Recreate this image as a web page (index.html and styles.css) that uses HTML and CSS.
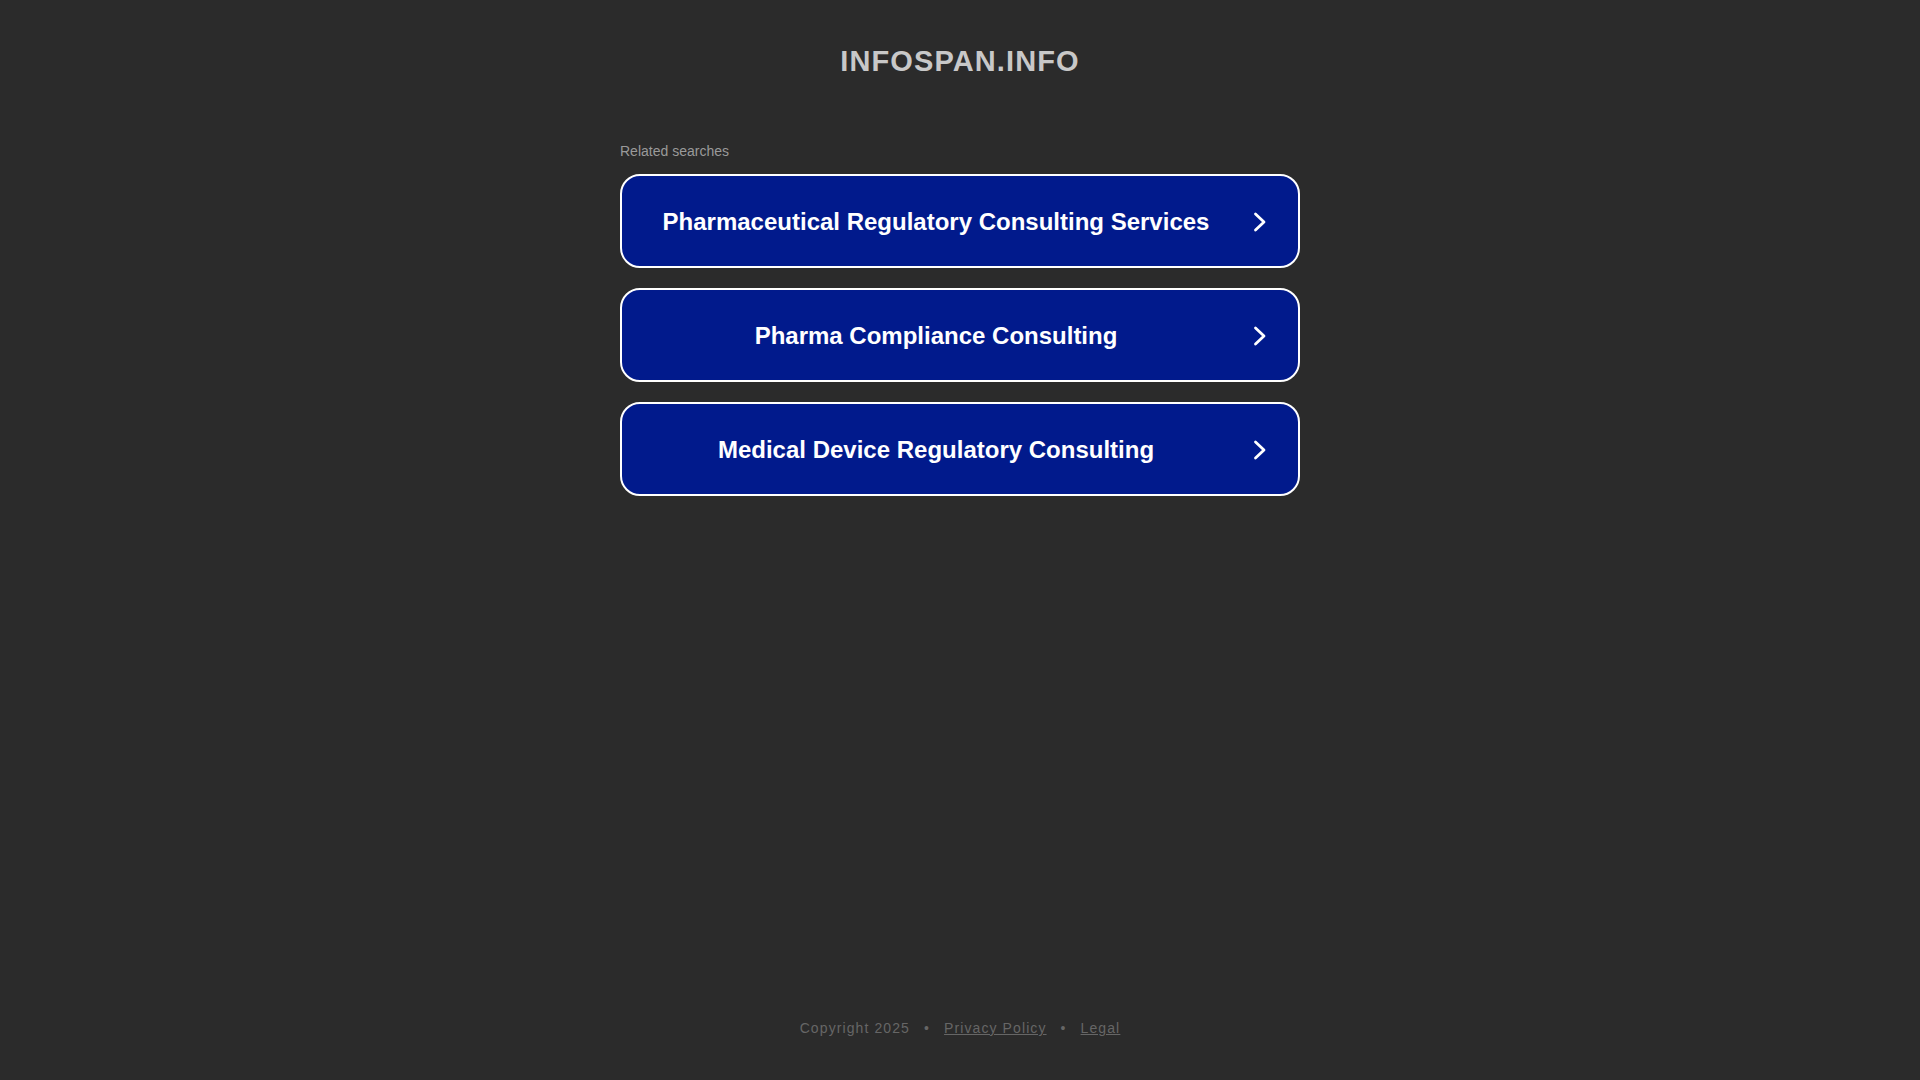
FILE: index.html
```html
<!DOCTYPE html>
<html lang="en">
<head>
<meta charset="utf-8">
<title>infospan.info</title>
<link rel="stylesheet" href="styles.css">
</head>
<body>
<div class="page">
  <header class="header">
    <h1 class="domain">INFOSPAN.INFO</h1>
  </header>
  <main class="main">
    <div class="related">Related searches</div>
    <a class="card" href="#">
      <span class="card-text">Pharmaceutical Regulatory Consulting Services</span>
      <span class="card-arrow"><svg viewBox="0 0 14 20" width="14" height="20"><path d="M2.5 2 L11 10 L2.5 18" fill="none" stroke="#fff" stroke-width="2.8" stroke-linecap="round" stroke-linejoin="round"/></svg></span>
    </a>
    <a class="card" href="#">
      <span class="card-text">Pharma Compliance Consulting</span>
      <span class="card-arrow"><svg viewBox="0 0 14 20" width="14" height="20"><path d="M2.5 2 L11 10 L2.5 18" fill="none" stroke="#fff" stroke-width="2.8" stroke-linecap="round" stroke-linejoin="round"/></svg></span>
    </a>
    <a class="card" href="#">
      <span class="card-text">Medical Device Regulatory Consulting</span>
      <span class="card-arrow"><svg viewBox="0 0 14 20" width="14" height="20"><path d="M2.5 2 L11 10 L2.5 18" fill="none" stroke="#fff" stroke-width="2.8" stroke-linecap="round" stroke-linejoin="round"/></svg></span>
    </a>
  </main>
  <footer class="footer">
    <span>Copyright 2025</span>
    <span class="dot">•</span>
    <a href="#">Privacy Policy</a>
    <span class="dot">•</span>
    <a href="#">Legal</a>
  </footer>
</div>
</body>
</html>
```
FILE: styles.css
```css
html, body {
  margin: 0;
  padding: 0;
  height: 100%;
  background: #2b2b2b;
  font-family: "Liberation Sans", Arial, sans-serif;
}
.page {
  min-height: 100vh;
  display: flex;
  flex-direction: column;
  align-items: center;
}
.header {
  padding-top: 44px;
}
.domain {
  margin: 0;
  font-size: 29px;
  line-height: 34px;
  font-weight: bold;
  letter-spacing: 1.1px;
  color: #c8c8c8;
  text-align: center;
}
.main {
  width: 680px;
  margin-top: 64px;
  display: flex;
  flex-direction: column;
}
.related {
  font-size: 14px;
  line-height: 18px;
  color: #9a9a9a;
  margin-bottom: 14px;
}
.card {
  box-sizing: border-box;
  height: 94px;
  display: flex;
  align-items: center;
  background: #011a8c;
  border: 2px solid #ffffff;
  border-radius: 20px;
  margin-bottom: 20px;
  padding: 2px 28px 0 0;
  text-decoration: none;
}
.card-text {
  flex: 1;
  text-align: center;
  font-size: 24px;
  font-weight: bold;
  color: #ffffff;
}
.card-arrow {
  width: 20px;
  display: flex;
  justify-content: center;
}
.footer {
  margin-top: auto;
  padding-bottom: 44px;
  font-size: 14px;
  letter-spacing: 1.1px;
  color: #666666;
  display: flex;
  gap: 12px;
}
.footer a {
  color: #666666;
  text-decoration: underline;
}
.dot {
  padding: 0 2px;
}
```
